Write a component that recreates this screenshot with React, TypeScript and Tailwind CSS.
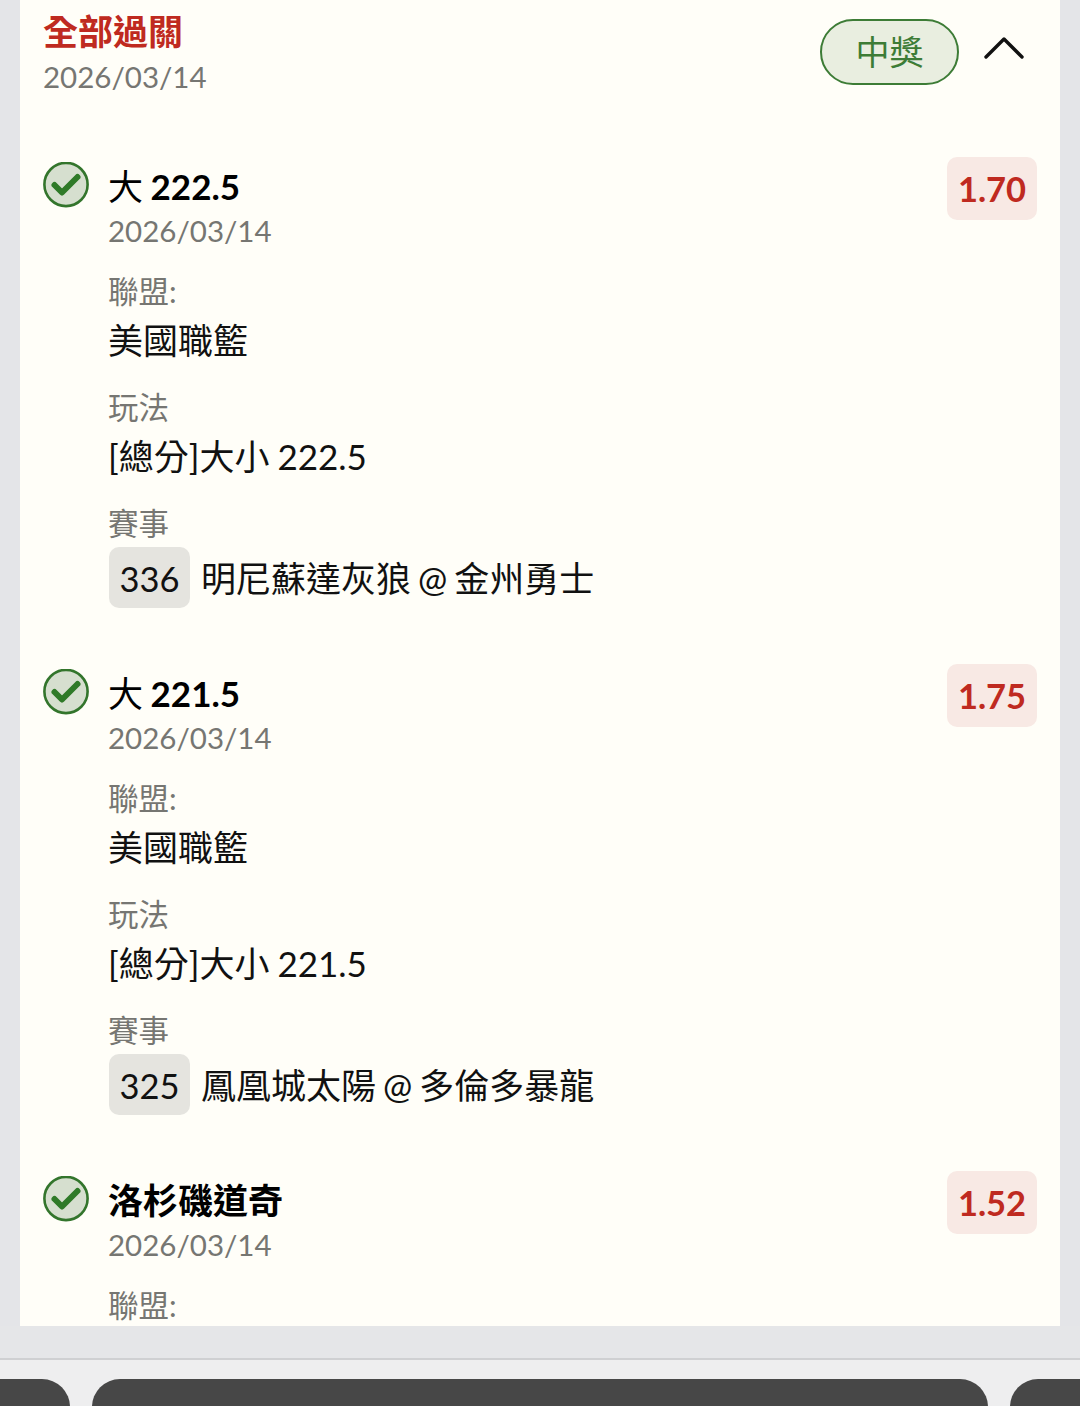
const FONT = "font-['Lato','Noto_Sans_CJK_TC',sans-serif]";

const legs = [
  { name: "大", line: "222.5", odds: "1.70", play: "[總分]大小 222.5", code: "336", match: "明尼蘇達灰狼 @ 金州勇士" },
  { name: "大", line: "221.5", odds: "1.75", play: "[總分]大小 221.5", code: "325", match: "鳳凰城太陽 @ 多倫多暴龍" },
];

function CheckIcon() {
  return (
    <svg width="46" height="46" viewBox="0 0 46 46" className="shrink-0">
      <circle cx="23" cy="22.5" r="21.6" fill="#d6dfcf" stroke="#33752c" strokeWidth="2.6" />
      <path d="M11.5 23l7.5 7.5L34.5 15" fill="none" stroke="#2f7a28" strokeWidth="6" strokeLinecap="round" strokeLinejoin="round" />
    </svg>
  );
}

function Odds({ value }: { value: string }) {
  return (
    <div className="flex h-[63px] w-[90px] shrink-0 items-center justify-center rounded-[10px] bg-[#f8e9e4] text-[34.5px] font-bold text-[#bf2a20]">
      {value}
    </div>
  );
}

function Field({ label, value }: { label: string; value: string }) {
  return (
    <div className="mt-[23px]">
      <div className="text-[30.5px] leading-[40px] text-[#767672]">{label}</div>
      <div className="mt-[5px] text-[35px] leading-[48px] text-[#111] [word-spacing:-1px]">{value}</div>
    </div>
  );
}

function Leg({ name, line, odds, play, code, match }: (typeof legs)[number]) {
  return (
    <div className="flex h-[507px] items-start">
      <div className="mt-[5px]">
        <CheckIcon />
      </div>
      <div className="ml-[19px] min-w-0 flex-1">
        <div className="pt-[5px] text-[35px] leading-[48px] font-bold text-black [word-spacing:-1px]">
          <span className="font-normal">{name}</span> {line}
        </div>
        <div className="mt-[1px] mb-[-3px] text-[29.5px] leading-[40px] text-[#767672]">2026/03/14</div>
        <Field label="聯盟:" value="美國職籃" />
        <Field label="玩法" value={play} />
        <div className="mt-[23px]">
          <div className="text-[30.5px] leading-[40px] text-[#767672]">賽事</div>
          <div className="mt-[4px] ml-[1px] flex items-center text-[35px] text-[#111]">
            <span className="flex h-[61px] w-[81px] items-center justify-center rounded-[10px] bg-[#e5e4df] pt-[2px] text-[34.5px]">
              {code}
            </span>
            <span className="ml-[11px] pt-[2px] [word-spacing:-2px]">{match}</span>
          </div>
        </div>
      </div>
      <Odds value={odds} />
    </div>
  );
}

export default function App() {
  return (
    <div className={`${FONT} flex h-[1406px] w-[1080px] flex-col overflow-hidden bg-[#e4e5e8]`}>
      <div className="mx-[20px] h-[1326px] shrink-0 overflow-hidden bg-[#fffef8] px-[23px]">
        <div className="flex h-[157px] items-start justify-between">
          <div className="pt-[8px]">
            <div className="text-[35px] leading-[46px] font-bold text-[#bf2a20]">全部過關</div>
            <div className="mt-[1px] text-[29.5px] leading-[44px] text-[#767672]">2026/03/14</div>
          </div>
          <div className="mt-[19px] mr-[11px] flex items-start">
            <span className="flex h-[66px] w-[139px] items-center justify-center rounded-full border-[2.5px] border-[#3d7c36] bg-[#e9eee0] pb-[2px] text-[34px] text-[#3d7c36]">
              中獎
            </span>
            <svg width="44" height="30" viewBox="0 0 44 30" className="mt-[15px] ml-[23px]">
              <path d="M4 23L22 5l18 18" fill="none" stroke="#111" strokeWidth="3.4" strokeLinecap="round" strokeLinejoin="round" />
            </svg>
          </div>
        </div>
        {legs.map((leg) => (
          <Leg key={leg.code} {...leg} />
        ))}
        <div className="flex items-start">
          <div className="mt-[5px]">
            <CheckIcon />
          </div>
          <div className="ml-[19px] flex-1">
            <div className="pt-[5px] text-[35px] leading-[48px] font-bold text-black">洛杉磯道奇</div>
            <div className="mt-[1px] mb-[-3px] text-[29.5px] leading-[40px] text-[#767672]">2026/03/14</div>
            <div className="mt-[23px] text-[30.5px] leading-[40px] text-[#767672]">聯盟:</div>
          </div>
          <Odds value="1.52" />
        </div>
      </div>
      <div className="h-[34px] shrink-0 border-b-2 border-[#cfd0d2] bg-[#e5e6e8]" />
      <div className="flex flex-1 items-start gap-[22px] bg-[#eeeeef] pt-[19px]">
        <div className="h-[60px] w-[70px] shrink-0 rounded-tr-[28px] bg-[#474747]" />
        <div className="h-[60px] flex-1 rounded-t-[28px] bg-[#474747]" />
        <div className="h-[60px] w-[70px] shrink-0 rounded-tl-[28px] bg-[#474747]" />
      </div>
    </div>
  );
}
